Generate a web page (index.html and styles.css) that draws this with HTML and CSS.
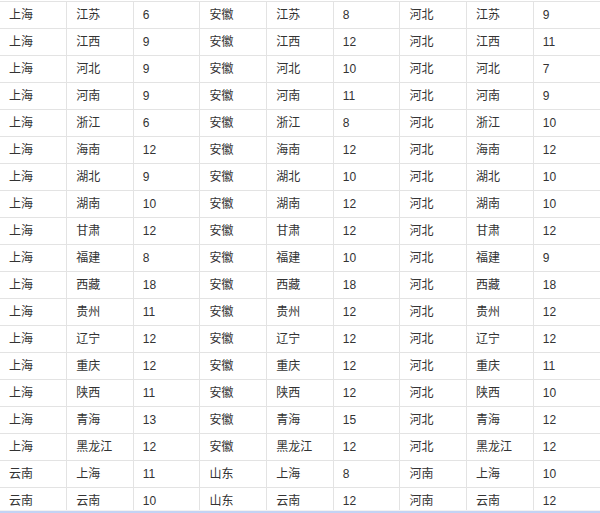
FILE: index.html
```html
<!DOCTYPE html>
<html lang="zh">
<head>
<meta charset="utf-8">
<link rel="stylesheet" href="styles.css">
</head>
<body>
<div class="page">
  <div class="viewport">
    <table class="grid">
      <colgroup>
        <col><col><col><col><col><col><col><col><col>
      </colgroup>
      <tbody>
        <tr><td>上海</td><td>江苏</td><td>6</td><td>安徽</td><td>江苏</td><td>8</td><td>河北</td><td>江苏</td><td>9</td></tr>
        <tr><td>上海</td><td>江西</td><td>9</td><td>安徽</td><td>江西</td><td>12</td><td>河北</td><td>江西</td><td>11</td></tr>
        <tr><td>上海</td><td>河北</td><td>9</td><td>安徽</td><td>河北</td><td>10</td><td>河北</td><td>河北</td><td>7</td></tr>
        <tr><td>上海</td><td>河南</td><td>9</td><td>安徽</td><td>河南</td><td>11</td><td>河北</td><td>河南</td><td>9</td></tr>
        <tr><td>上海</td><td>浙江</td><td>6</td><td>安徽</td><td>浙江</td><td>8</td><td>河北</td><td>浙江</td><td>10</td></tr>
        <tr><td>上海</td><td>海南</td><td>12</td><td>安徽</td><td>海南</td><td>12</td><td>河北</td><td>海南</td><td>12</td></tr>
        <tr><td>上海</td><td>湖北</td><td>9</td><td>安徽</td><td>湖北</td><td>10</td><td>河北</td><td>湖北</td><td>10</td></tr>
        <tr><td>上海</td><td>湖南</td><td>10</td><td>安徽</td><td>湖南</td><td>12</td><td>河北</td><td>湖南</td><td>10</td></tr>
        <tr><td>上海</td><td>甘肃</td><td>12</td><td>安徽</td><td>甘肃</td><td>12</td><td>河北</td><td>甘肃</td><td>12</td></tr>
        <tr><td>上海</td><td>福建</td><td>8</td><td>安徽</td><td>福建</td><td>10</td><td>河北</td><td>福建</td><td>9</td></tr>
        <tr><td>上海</td><td>西藏</td><td>18</td><td>安徽</td><td>西藏</td><td>18</td><td>河北</td><td>西藏</td><td>18</td></tr>
        <tr><td>上海</td><td>贵州</td><td>11</td><td>安徽</td><td>贵州</td><td>12</td><td>河北</td><td>贵州</td><td>12</td></tr>
        <tr><td>上海</td><td>辽宁</td><td>12</td><td>安徽</td><td>辽宁</td><td>12</td><td>河北</td><td>辽宁</td><td>12</td></tr>
        <tr><td>上海</td><td>重庆</td><td>12</td><td>安徽</td><td>重庆</td><td>12</td><td>河北</td><td>重庆</td><td>11</td></tr>
        <tr><td>上海</td><td>陕西</td><td>11</td><td>安徽</td><td>陕西</td><td>12</td><td>河北</td><td>陕西</td><td>10</td></tr>
        <tr><td>上海</td><td>青海</td><td>13</td><td>安徽</td><td>青海</td><td>15</td><td>河北</td><td>青海</td><td>12</td></tr>
        <tr><td>上海</td><td>黑龙江</td><td>12</td><td>安徽</td><td>黑龙江</td><td>12</td><td>河北</td><td>黑龙江</td><td>12</td></tr>
        <tr><td>云南</td><td>上海</td><td>11</td><td>山东</td><td>上海</td><td>8</td><td>河南</td><td>上海</td><td>10</td></tr>
        <tr><td>云南</td><td>云南</td><td>10</td><td>山东</td><td>云南</td><td>12</td><td>河南</td><td>云南</td><td>12</td></tr>
      </tbody>
    </table>
  </div>
  <div class="strip"></div>
</div>
</body>
</html>
```

FILE: styles.css
```css
html, body {
  margin: 0;
  padding: 0;
  background: #ffffff;
}

.page {
  width: 600px;
  height: 513px;
  overflow: hidden;
  display: flex;
  flex-direction: column;
}

.viewport {
  height: 509px;
  overflow: hidden;
  padding-top: 1px;
  border-bottom: 1px solid #f1f1f1;
  flex: none;
}

.grid {
  width: 600px;
  table-layout: fixed;
  border-collapse: collapse;
  font-family: "Liberation Sans", "Noto Sans CJK SC", sans-serif;
  font-size: 12px;
  color: #333333;
}

.grid td {
  height: 26px;
  padding: 0 0 0 9px;
  border-top: 1px solid #e3e3e3;
  border-bottom: 1px solid #e3e3e3;
  border-right: 1px solid #e3e3e3;
  vertical-align: middle;
  white-space: nowrap;
  box-sizing: border-box;
  line-height: 16px;
}

.grid td:last-child {
  border-right: none;
}

.grid tr td {
  height: 27px;
}

.strip {
  flex: none;
  height: 3px;
  background: #c3d3f4;
}
```
